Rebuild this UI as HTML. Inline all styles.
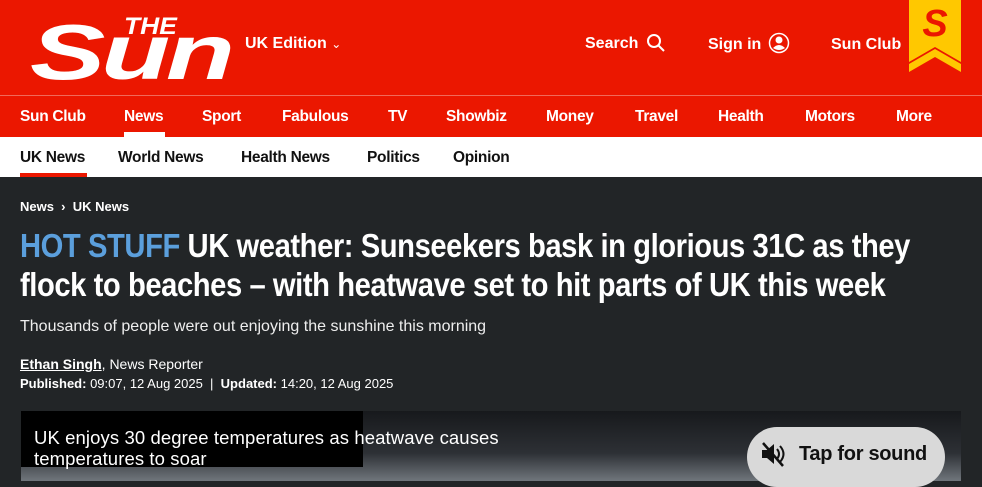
<!DOCTYPE html>
<html><head><style>
body{margin:0;width:982px;height:477px;overflow:hidden;background:#222527;font-family:"Liberation Sans",sans-serif;}
.top{position:absolute;left:0;top:0;width:982px;height:96px;background:#eb1700;border-bottom:1px solid #f06a5a;box-sizing:border-box}
.w{color:#fff;font-weight:bold;position:absolute;font-size:16px}
.nav{position:absolute;top:96px;left:0;width:982px;height:41px;background:#eb1700}
.nav span{position:absolute;top:12px;color:#fff;font-weight:bold;font-size:15.5px;letter-spacing:-0.3px}
.sub{position:absolute;top:137px;left:0;width:982px;height:40px;background:#fff}
.sub span{position:absolute;top:12px;color:#111;font-weight:bold;font-size:15.5px;letter-spacing:-0.3px}
.t{position:absolute;color:#fff}
</style></head><body>
<div class="top">
<div class="t" style="left:124px;top:13px;font:italic 900 24px 'Liberation Sans';transform:scaleX(1.1);transform-origin:left">THE</div>
<div class="t" style="left:30px;top:12px;font:italic 900 78px/80px 'Liberation Sans';letter-spacing:-3px;transform:scaleX(1.45);transform-origin:left">Sun</div>
<div class="w" style="left:245px;top:35px">UK Edition <span style="font-weight:normal;font-size:12px">&#8964;</span></div>
<div class="w" style="left:585px;top:35px">Search</div>
<svg style="position:absolute;left:646px;top:33px" width="20" height="20"><circle cx="8" cy="8" r="6" stroke="#fff" stroke-width="2" fill="none"/><path d="M12 12l6 6" stroke="#fff" stroke-width="2"/></svg>
<div class="w" style="left:708px;top:36px">Sign in</div>
<svg style="position:absolute;left:768px;top:32px" width="22" height="22"><circle cx="11" cy="11" r="9.5" stroke="#fff" stroke-width="1.5" fill="none"/><circle cx="11" cy="8" r="3.5" fill="#fff"/><path d="M5 16q6-6 12 0q-6 4-12 0z" fill="#fff"/></svg>
<div class="w" style="left:831px;top:36px">Sun Club</div>
<svg style="position:absolute;left:909px;top:0" width="52" height="72"><path d="M0 0h52v62l-26-15l-26 15z" fill="#ffc800"/><path d="M0 64l26-15l26 15v8l-26-15l-26 15z" fill="#ffc800"/><text x="26" y="36" text-anchor="middle" font-family="Liberation Sans" font-weight="900" font-style="italic" font-size="38" fill="#eb1700">S</text></svg>
</div>
<div class="nav">
<span style="left:20px">Sun Club</span><span style="left:124px">News</span><div style="position:absolute;left:124px;top:36px;width:41px;height:5px;background:#fff"></div>
<span style="left:202px">Sport</span><span style="left:282px">Fabulous</span><span style="left:388px">TV</span><span style="left:446px">Showbiz</span><span style="left:546px">Money</span><span style="left:635px">Travel</span><span style="left:718px">Health</span><span style="left:805px">Motors</span><span style="left:896px">More</span>
</div>
<div class="sub">
<span style="left:20px">UK News</span><div style="position:absolute;left:20px;top:36px;width:67px;height:4px;background:#eb1700"></div>
<span style="left:118px">World News</span><span style="left:241px">Health News</span><span style="left:367px">Politics</span><span style="left:453px">Opinion</span>
</div>
<div class="t" style="left:20px;top:199px;font-size:13px;font-weight:bold">News &nbsp;&rsaquo;&nbsp; UK News</div>
<div class="t" style="left:20px;top:226px;white-space:nowrap;font-size:33px;line-height:39px;font-weight:bold;letter-spacing:-0.5px;transform:scaleX(0.885);transform-origin:left top"><span style="color:#5b9fdc">HOT STUFF</span> UK weather: Sunseekers bask in glorious 31C as they<br>flock to beaches – with heatwave set to hit parts of UK this week</div>
<div class="t" style="left:20px;top:318px;font-size:16px;color:#eee">Thousands of people were out enjoying the sunshine this morning</div>
<div class="t" style="left:20px;top:356px;font-size:14px"><b style="text-decoration:underline">Ethan Singh</b>, News Reporter</div>
<div class="t" style="left:20px;top:376px;font-size:13px"><b>Published:</b> 09:07, 12 Aug 2025 &nbsp;| &nbsp;<b>Updated:</b> 14:20, 12 Aug 2025</div>
<div style="position:absolute;left:21px;top:411px;width:940px;height:70px;background:linear-gradient(#17191c,#2d3035 60%,#70767c)"></div>
<div style="position:absolute;left:21px;top:411px;width:342px;height:56px;background:#000"></div>
<div class="t" style="left:34px;top:427px;font-size:18.5px;line-height:21px;letter-spacing:0.1px;white-space:nowrap">UK enjoys 30 degree temperatures as heatwave causes<br>temperatures to soar</div>
<div style="position:absolute;left:747px;top:427px;width:198px;height:60px;border-radius:30px;background:#d9d9d9"></div>
<svg style="position:absolute;left:759px;top:440px" width="28" height="28"><path d="M3 10h5l7-6v20l-7-6H3z" fill="#111"/><path d="M18 9q4 5 0 10M21 6q7 8 0 16" stroke="#111" stroke-width="2" fill="none"/><path d="M4 3l20 23" stroke="#111" stroke-width="2.5"/></svg>
<div class="t" style="left:799px;top:443px;color:#111;font-size:20px;font-weight:bold;letter-spacing:-0.3px">Tap for sound</div>
</body></html>
